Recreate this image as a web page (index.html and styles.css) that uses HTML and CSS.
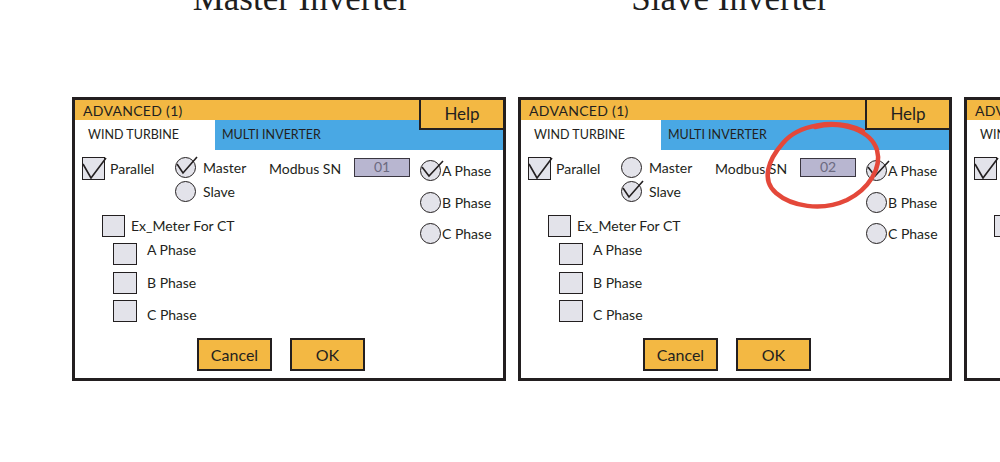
FILE: index.html
```html
<!DOCTYPE html>
<html>
<head>
    <title>Inverter Setup - Advanced</title>
    <link rel="stylesheet" href="styles.css">
</head>
<body>
    <div class="titles">
        <div class="title title-master">Master Inverter</div>
        <div class="title title-slave">Slave Inverter</div>
        <div class="title">Slave Inverter</div>
    </div>

    <div class="panels">
        <!-- master unit -->
        <div class="panel">
            <div class="bar">ADVANCED (1)</div>
            <div class="help">Help</div>
            <div class="tabs">
                <div class="tab">WIND TURBINE</div>
                <div class="tab active">MULTI INVERTER</div>
            </div>
            <div class="content">
                <div class="main">
                    <div class="top-row">
                        <div class="item">
                            <span class="box"><svg class="tick" viewBox="0 0 23 23"><path d="M1 7 L9 21 L24 1"/></svg></span>
                            <span class="label">Parallel</span>
                        </div>
                        <div class="roles">
                            <div class="item radio-item">
                                <span class="radio"><svg class="tick" viewBox="0 0 21 21"><path d="M2 7 L8 16 L22 0"/></svg></span>
                                <span class="label">Master</span>
                            </div>
                            <div class="item radio-item">
                                <span class="radio"></span>
                                <span class="label">Slave</span>
                            </div>
                        </div>
                        <div class="label">Modbus SN</div>
                        <div class="sn">01</div>
                    </div>
                    <div class="meter">
                        <div class="item">
                            <span class="box"></span>
                            <span class="label">Ex_Meter For CT</span>
                        </div>
                        <div class="meter-phases">
                            <div class="item"><span class="box small"></span><span class="label">A Phase</span></div>
                            <div class="item"><span class="box small"></span><span class="label">B Phase</span></div>
                            <div class="item"><span class="box small"></span><span class="label">C Phase</span></div>
                        </div>
                    </div>
                </div>
                <div class="phases">
                    <div class="item phase-item">
                        <span class="radio"><svg class="tick" viewBox="0 0 21 21"><path d="M2 7 L9 16 L23 1"/></svg></span>
                        <span class="label">A Phase</span>
                    </div>
                    <div class="item phase-item">
                        <span class="radio"></span>
                        <span class="label">B Phase</span>
                    </div>
                    <div class="item phase-item">
                        <span class="radio"></span>
                        <span class="label">C Phase</span>
                    </div>
                </div>
            </div>
            <div class="actions">
                <div class="btn">Cancel</div>
                <div class="btn">OK</div>
            </div>
        </div>

        <!-- slave unit, SN marked -->
        <div class="panel">
            <div class="bar">ADVANCED (1)</div>
            <div class="help">Help</div>
            <div class="tabs">
                <div class="tab">WIND TURBINE</div>
                <div class="tab active">MULTI INVERTER</div>
            </div>
            <div class="content">
                <div class="main">
                    <div class="top-row">
                        <div class="item">
                            <span class="box"><svg class="tick" viewBox="0 0 23 23"><path d="M1 7 L9 21 L24 1"/></svg></span>
                            <span class="label">Parallel</span>
                        </div>
                        <div class="roles">
                            <div class="item radio-item">
                                <span class="radio"></span>
                                <span class="label">Master</span>
                            </div>
                            <div class="item radio-item">
                                <span class="radio"><svg class="tick" viewBox="0 0 21 21"><path d="M2 7 L8 16 L22 0"/></svg></span>
                                <span class="label">Slave</span>
                            </div>
                        </div>
                        <div class="label">Modbus SN</div>
                        <div class="sn">02</div>
                    </div>
                    <div class="meter">
                        <div class="item">
                            <span class="box"></span>
                            <span class="label">Ex_Meter For CT</span>
                        </div>
                        <div class="meter-phases">
                            <div class="item"><span class="box small"></span><span class="label">A Phase</span></div>
                            <div class="item"><span class="box small"></span><span class="label">B Phase</span></div>
                            <div class="item"><span class="box small"></span><span class="label">C Phase</span></div>
                        </div>
                    </div>
                </div>
                <div class="phases">
                    <div class="item phase-item">
                        <span class="radio"><svg class="tick" viewBox="0 0 21 21"><path d="M2 7 L9 16 L23 1"/></svg></span>
                        <span class="label">A Phase</span>
                    </div>
                    <div class="item phase-item">
                        <span class="radio"></span>
                        <span class="label">B Phase</span>
                    </div>
                    <div class="item phase-item">
                        <span class="radio"></span>
                        <span class="label">C Phase</span>
                    </div>
                </div>
            </div>
            <div class="actions">
                <div class="btn">Cancel</div>
                <div class="btn">OK</div>
            </div>
            <svg class="mark" viewBox="0 0 428 278">
                <path d="M342 31 C312 17, 276 26, 262 43 C247 60, 240 80, 255 93 C270 106, 300 112, 326 100 C348 89, 361 68, 356 50 C350 31, 322 20, 294 27"/>
            </svg>
        </div>

        <!-- next slave unit -->
        <div class="panel">
            <div class="bar">ADVANCED (1)</div>
            <div class="help">Help</div>
            <div class="tabs">
                <div class="tab">WIND TURBINE</div>
                <div class="tab active">MULTI INVERTER</div>
            </div>
            <div class="content">
                <div class="main">
                    <div class="top-row">
                        <div class="item">
                            <span class="box"><svg class="tick" viewBox="0 0 23 23"><path d="M1 7 L9 21 L24 1"/></svg></span>
                            <span class="label">Parallel</span>
                        </div>
                        <div class="roles">
                            <div class="item radio-item">
                                <span class="radio"></span>
                                <span class="label">Master</span>
                            </div>
                            <div class="item radio-item">
                                <span class="radio"><svg class="tick" viewBox="0 0 21 21"><path d="M2 7 L8 16 L22 0"/></svg></span>
                                <span class="label">Slave</span>
                            </div>
                        </div>
                        <div class="label">Modbus SN</div>
                        <div class="sn">03</div>
                    </div>
                    <div class="meter">
                        <div class="item">
                            <span class="box"></span>
                            <span class="label">Ex_Meter For CT</span>
                        </div>
                        <div class="meter-phases">
                            <div class="item"><span class="box small"></span><span class="label">A Phase</span></div>
                            <div class="item"><span class="box small"></span><span class="label">B Phase</span></div>
                            <div class="item"><span class="box small"></span><span class="label">C Phase</span></div>
                        </div>
                    </div>
                </div>
                <div class="phases">
                    <div class="item phase-item">
                        <span class="radio"><svg class="tick" viewBox="0 0 21 21"><path d="M2 7 L9 16 L23 1"/></svg></span>
                        <span class="label">A Phase</span>
                    </div>
                    <div class="item phase-item">
                        <span class="radio"></span>
                        <span class="label">B Phase</span>
                    </div>
                    <div class="item phase-item">
                        <span class="radio"></span>
                        <span class="label">C Phase</span>
                    </div>
                </div>
            </div>
            <div class="actions">
                <div class="btn">Cancel</div>
                <div class="btn">OK</div>
            </div>
        </div>
    </div>
</body>
</html>
```

FILE: styles.css
```css
body {
    margin: 0;
    background: #fff;
    overflow: hidden;
    font-family: Lato, "Liberation Sans", sans-serif;
    color: #231f20;
}
.titles {
    display: flex;
    gap: 12px;
    padding-left: 72px;
    margin-top: -19px;
}
.title {
    flex: none;
    width: 434px;
    box-sizing: border-box;
    text-align: center;
    font-family: "Liberation Serif", serif;
    font-size: 35px;
    line-height: 35px;
    height: 35px;
    color: #1e1e1e;
}
.title-master {
    padding-left: 24px;
}
.title-slave {
    padding-right: 10px;
}
.panels {
    display: flex;
    gap: 12px;
    padding-left: 72px;
    margin-top: 81px;
}
.panel {
    flex: none;
    position: relative;
    width: 434px;
    height: 284px;
    box-sizing: border-box;
    border: 3px solid #231f20;
    background: #fff;
    display: flex;
    flex-direction: column;
}
.bar {
    height: 20px;
    line-height: 21px;
    padding-left: 8px;
    background: #f3b843;
    font-size: 14px;
    letter-spacing: 0.3px;
}
.help {
    position: absolute;
    top: 0;
    right: 0;
    width: 82px;
    height: 28px;
    border-left: 2px solid #231f20;
    border-bottom: 2px solid #231f20;
    background: #f3b843;
    text-align: center;
    line-height: 28px;
    font-size: 17px;
}
.tabs {
    display: flex;
    height: 30px;
    font-size: 12.5px;
    line-height: 30px;
}
.tab {
    width: 127px;
    padding-left: 13px;
}
.tab.active {
    flex: 1;
    width: auto;
    padding-left: 7px;
    background: #49a8e4;
}
.content {
    display: flex;
    padding: 7px 0 0 7px;
    font-size: 14px;
}
.main {
    width: 338px;
}
.top-row {
    display: grid;
    grid-template-columns: 93px 94px 85px 56px;
    height: 57px;
}
.item {
    display: flex;
    align-items: center;
    gap: 5px;
}
.label {
    line-height: 23px;
    white-space: nowrap;
}
.box, .radio {
    position: relative;
    flex: none;
    box-sizing: border-box;
    width: 23px;
    height: 23px;
    border: 1.5px solid #231f20;
    background: #e3e3ea;
}
.radio {
    width: 21px;
    height: 21px;
    border-radius: 50%;
}
.tick {
    position: absolute;
    left: -1.5px;
    top: -1.5px;
    overflow: visible;
}
.box .tick {
    width: 23px;
    height: 23px;
}
.radio .tick {
    width: 21px;
    height: 21px;
}
.tick path {
    fill: none;
    stroke: #231f20;
    stroke-width: 1.6;
}
.top-row > .item {
    align-items: flex-start;
}
.roles {
    display: flex;
    flex-direction: column;
    gap: 3px;
}
.radio-item {
    gap: 7px;
    height: 21px;
}
.sn {
    margin-top: 1px;
    height: 19px;
    box-sizing: border-box;
    border: 1.5px solid #3a3640;
    background: #b8b6d0;
    color: #6c6a80;
    text-align: center;
    line-height: 16px;
    font-size: 14px;
}
.meter {
    padding-left: 20px;
}
.meter > .item {
    gap: 6px;
}
.meter > .item .box {
    height: 22px;
}
.meter-phases {
    display: flex;
    flex-direction: column;
    gap: 6px;
    margin-top: 6px;
    padding-left: 11px;
}
.meter-phases .item {
    gap: 10px;
}
.meter-phases .item:first-child .label {
    margin-top: -9px;
}
.meter-phases .item:last-child .label {
    margin-bottom: -7px;
}
.box.small {
    width: 24px;
    height: 22px;
}
.phases {
    display: flex;
    flex-direction: column;
    gap: 10.5px;
    margin-top: 3px;
}
.phase-item {
    gap: 1px;
    height: 21px;
}
.actions {
    margin-top: auto;
    display: flex;
    gap: 18px;
    padding: 0 0 7px 122px;
}
.btn {
    width: 75px;
    height: 33px;
    box-sizing: border-box;
    border: 2px solid #231f20;
    background: #f3b843;
    text-align: center;
    line-height: 29px;
    font-size: 16px;
}
/* hand-drawn marker loop over the SN field */
.mark {
    position: absolute;
    left: 0;
    top: 0;
    width: 428px;
    height: 278px;
    overflow: visible;
    pointer-events: none;
}
.mark path {
    fill: none;
    stroke: #e4483a;
    stroke-width: 4.5;
    stroke-linecap: round;
}
```
